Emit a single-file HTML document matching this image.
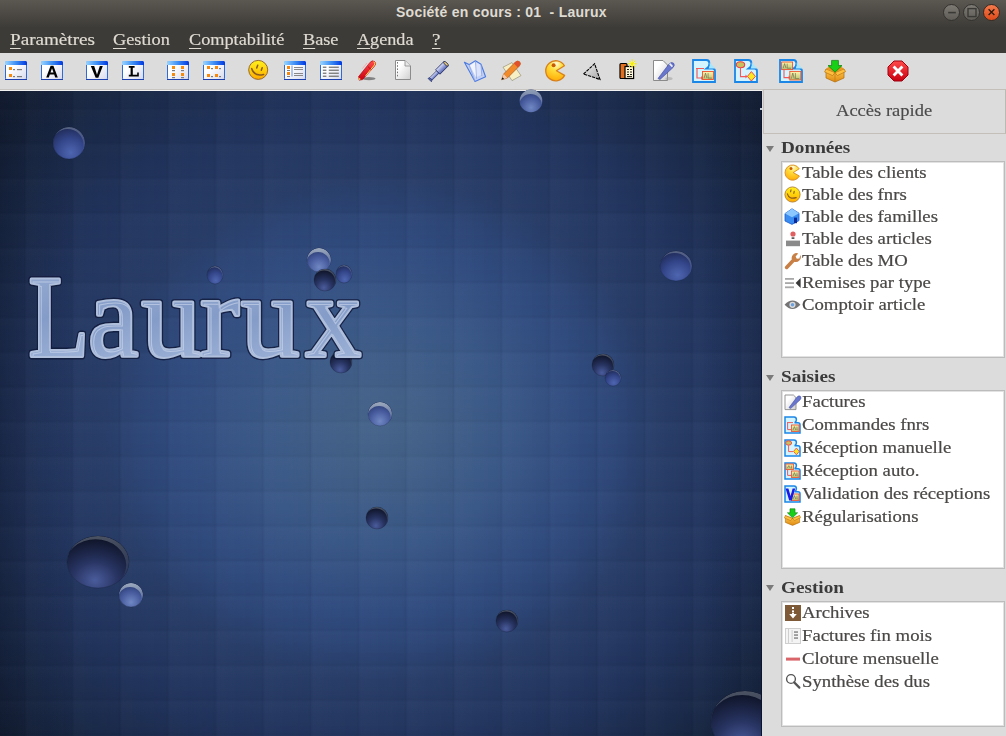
<!DOCTYPE html>
<html><head><meta charset="utf-8"><style>
*{margin:0;padding:0;box-sizing:border-box}
html,body{width:1006px;height:736px;overflow:hidden;background:#dcdcdc;font-family:"Liberation Serif",serif;position:relative}
.abs{position:absolute}
.ic{position:absolute;overflow:visible}
#title{left:0;top:0;width:1006px;height:27px;background:linear-gradient(#5b5751,#3e3c38);}
#title .t{position:absolute;left:396px;top:4px;font:bold 14px "Liberation Sans",sans-serif;color:#dfdbd2;letter-spacing:0.25px;white-space:pre}
.wb{position:absolute;top:4px;width:17px;height:17px;border-radius:50%;border:1px solid #34332f;background:linear-gradient(#7d7a74,#5f5c57)}
#menu{left:0;top:27px;width:1006px;height:26px;background:#3c3b37}
#menu span{position:absolute;top:3px;font-size:17px;color:#dfdbd2;-webkit-text-stroke:0.2px #dfdbd2;white-space:pre;display:inline-block;transform-origin:0 0}
#menu u{text-decoration:underline;text-underline-offset:2.5px;text-decoration-thickness:1px}
#tool{left:0;top:53px;width:1006px;height:36px;background:#dcdcdc}
#sep{left:0;top:89px;width:763px;height:1px;background:#c8c4bf}
#sep2{left:0;top:90px;width:762px;height:1px;background:#f2f2f2}
#mdi{left:0;top:91px;width:762px;height:645px;overflow:hidden;
background:
 repeating-linear-gradient(90deg, rgba(0,0,0,0.07) 0px, rgba(0,0,0,0.01) 1.2px, rgba(255,255,255,0.01) 3px, rgba(0,0,0,0.0) 24px, rgba(0,0,0,0.02) 46px, rgba(0,0,0,0.05) 47.7px),
 repeating-linear-gradient(180deg, rgba(0,0,0,0.055) 0px, rgba(0,0,0,0.01) 1.2px, rgba(255,255,255,0.01) 3px, rgba(0,0,0,0.0) 17px, rgba(0,0,0,0.015) 33px, rgba(0,0,0,0.045) 34.8px),
 linear-gradient(90deg, rgba(8,12,24,0.28) 0px, rgba(8,12,24,0.12) 30px, rgba(8,12,24,0) 80px, rgba(8,12,24,0) 700px, rgba(8,12,24,0.12) 762px),
 radial-gradient(ellipse 250px 225px at 380px 339px, #46648b 0%, #436189 16%, #3a5888 52%, #314c80 80%, #2d4778 94%, #283d68 112%, #243862 132%, #20325a 150%, #1a2a4a 175%, #15213a 200%, #121b2e 230%);
background-position: 23.9px 0, 0 16.6px, 0 0, 0 0;
}
#dock{left:762px;top:90px;width:244px;height:646px;background:#dcdcdc}
#acc{left:763px;top:89px;width:243px;height:45px;border:1px solid #c4c0b9;border-right-color:#bdb9b2;background:#dcdcdc}
#acc span{position:absolute;left:72px;top:11px;font-size:17px;color:#4a4a4a;display:inline-block;transform:scaleX(1.09);-webkit-text-stroke:0.15px #4a4a4a;transform-origin:0 0;white-space:pre}
.hdr{position:absolute;left:781px;font-weight:bold;font-size:16px;color:#3a3a3a;display:inline-block;transform:scaleX(1.2);transform-origin:0 0;white-space:pre}
.arr{position:absolute;left:766px;width:0;height:0;border-left:4px solid transparent;border-right:4px solid transparent;border-top:6px solid #7a7a7a}
.lb{position:absolute;left:781px;width:224px;border:1px solid #bcbcbc;background:#fff;box-shadow:inset 1px 1px 0 #e2e2e2, inset -1px -1px 0 #e2e2e2}
.tx{position:absolute;left:802px;font-size:16px;color:#4a4846;-webkit-text-stroke:0.2px #4a4846;display:inline-block;transform:scaleX(1.17);transform-origin:0 0;white-space:pre;line-height:18px}
</style></head><body>
<svg width="0" height="0" style="position:absolute">
<defs>
<linearGradient id="wt" x1="0" y1="0" x2="1" y2="0"><stop offset="0" stop-color="#9ad6ff"/><stop offset="0.5" stop-color="#3d8ef5"/><stop offset="1" stop-color="#0038e0"/></linearGradient>
<linearGradient id="wb" x1="0" y1="0" x2="1" y2="1"><stop offset="0.35" stop-color="#ffffff"/><stop offset="1" stop-color="#d6d9ec"/></linearGradient>
<radialGradient id="yelp" cx="0.55" cy="0.15" r="0.9"><stop offset="0" stop-color="#fffbe0"/><stop offset="0.35" stop-color="#ffe040"/><stop offset="1" stop-color="#ffa800"/></radialGradient><linearGradient id="yel" x1="0" y1="0" x2="0" y2="1"><stop offset="0" stop-color="#fff020"/><stop offset="0.5" stop-color="#ffd20a"/><stop offset="1" stop-color="#ffa800"/></linearGradient>
<linearGradient id="docg" x1="0" y1="0" x2="1" y2="1"><stop offset="0.3" stop-color="#ffffff"/><stop offset="1" stop-color="#cfcfcf"/></linearGradient>
<linearGradient id="telg2" x1="0" y1="0" x2="0" y2="1"><stop offset="0" stop-color="#dfe4fa"/><stop offset="0.5" stop-color="#9aa6dc"/><stop offset="1" stop-color="#5664b0"/></linearGradient><linearGradient id="telg" x1="0" y1="0" x2="1" y2="0"><stop offset="0" stop-color="#c8d0f0"/><stop offset="1" stop-color="#5866b0"/></linearGradient>
<linearGradient id="boxg" x1="0" y1="0" x2="0" y2="1"><stop offset="0" stop-color="#ffcc55"/><stop offset="1" stop-color="#e08a10"/></linearGradient>
<linearGradient id="redg" x1="0" y1="0" x2="0" y2="1"><stop offset="0" stop-color="#ff4a4a"/><stop offset="1" stop-color="#c80010"/></linearGradient>
<linearGradient id="abg" x1="0" y1="0" x2="0" y2="1"><stop offset="0" stop-color="#fff7b0"/><stop offset="1" stop-color="#b8c070"/></linearGradient>
<radialGradient id="drop" cx="0.55" cy="0.8" r="0.8"><stop offset="0" stop-color="#4e66b0"/><stop offset="0.55" stop-color="#34468a"/><stop offset="1" stop-color="#1e2a56"/></radialGradient>
<radialGradient id="dropd" cx="0.45" cy="0.85" r="0.8"><stop offset="0" stop-color="#4a5c9c"/><stop offset="0.45" stop-color="#283462"/><stop offset="1" stop-color="#0e1428"/></radialGradient>
<radialGradient id="dropl" cx="0.5" cy="0.8" r="0.75"><stop offset="0" stop-color="#7088c4"/><stop offset="0.6" stop-color="#44589a"/><stop offset="1" stop-color="#2c3c70"/></radialGradient>
<linearGradient id="rim" x1="0.3" y1="0" x2="0.5" y2="1"><stop offset="0" stop-color="#c0ccd4" stop-opacity="0.85"/><stop offset="0.22" stop-color="#8aa0c0" stop-opacity="0"/></linearGradient>
<linearGradient id="txt" x1="0" y1="0" x2="0.2" y2="1"><stop offset="0" stop-color="#9cb0d4"/><stop offset="0.55" stop-color="#849cc8"/><stop offset="1" stop-color="#a0b4d8"/></linearGradient>
</defs></svg>
<div id="title" class="abs"><div class="t">Société en cours : 01  - Laurux</div>
 <div class="wb" style="left:943px"></div>
 <div class="wb" style="left:963px"></div>
 <div class="wb" style="left:983px;background:linear-gradient(#f47a4c,#df4a19);border-color:#3b2a22"></div>
 <svg class="ic" style="left:940px;top:0" width="66" height="27" viewBox="0 0 66 27"><path d="M8.2,12.6 H15.8" stroke="#3a3935" stroke-width="1.6"/><rect x="28" y="8.6" width="8" height="8" fill="none" stroke="#3a3935" stroke-width="1.4"/><path d="M48.6,9.2 L54.4,15 M54.4,9.2 L48.6,15" stroke="#2a1a10" stroke-width="1.3"/></svg>
</div>
<div id="menu" class="abs">
 <span style="left:10px;transform:scaleX(1.125)"><u>P</u>aramètres</span>
 <span style="left:113px;transform:scaleX(1.076)"><u>G</u>estion</span>
 <span style="left:189px;transform:scaleX(1.073)"><u>C</u>omptabilité</span>
 <span style="left:303px;transform:scaleX(1.073)"><u>B</u>ase</span>
 <span style="left:357px;transform:scaleX(1.068)"><u>A</u>genda</span>
 <span style="left:432px;transform:scaleX(1.12)"><u>?</u></span>
</div>
<div id="tool" class="abs"></div>
<svg class="ic" style="left:5px;top:61px" width="22" height="19" viewBox="0 0 22 19"><rect x="0.5" y="0.5" width="21" height="18" rx="1.2" fill="url(#wb)" stroke="#2f6ad6"/><path d="M0,4 V1.5 Q0,0 1.5,0 H20.5 Q22,0 22,1.5 V4 Z" fill="url(#wt)"/><rect x="0" y="18" width="22" height="1" fill="#1c3fb0"/><rect x="4" y="6" width="3" height="3" fill="#f78a0c"/><rect x="4" y="13" width="3" height="3" fill="#f78a0c"/><rect x="8" y="8" width="2" height="1.2" fill="#7c7c7c"/><rect x="12" y="8" width="5" height="1.2" fill="#7c7c7c"/><rect x="8" y="15" width="2" height="1.2" fill="#7c7c7c"/><rect x="12" y="15" width="5" height="1.2" fill="#7c7c7c"/></svg>
<svg class="ic" style="left:41px;top:61px" width="22" height="19" viewBox="0 0 22 19"><rect x="0.5" y="0.5" width="21" height="18" rx="1.2" fill="url(#wb)" stroke="#2f6ad6"/><path d="M0,4 V1.5 Q0,0 1.5,0 H20.5 Q22,0 22,1.5 V4 Z" fill="url(#wt)"/><rect x="0" y="18" width="22" height="1" fill="#1c3fb0"/><path d="M5.2,16.6 L9.6,4.8 H12.4 L16.8,16.6 H14.2 L13.2,13.6 H8.8 L7.8,16.6 Z M9.5,11.5 H12.5 L11,7.2 Z" fill="#000" fill-rule="evenodd"/></svg>
<svg class="ic" style="left:86px;top:61px" width="22" height="19" viewBox="0 0 22 19"><rect x="0.5" y="0.5" width="21" height="18" rx="1.2" fill="url(#wb)" stroke="#2f6ad6"/><path d="M0,4 V1.5 Q0,0 1.5,0 H20.5 Q22,0 22,1.5 V4 Z" fill="url(#wt)"/><rect x="0" y="18" width="22" height="1" fill="#1c3fb0"/><path d="M4.8,5 H8.2 L11,13.8 L13.8,5 H16.8 L12.3,16.8 H9.7 Z" fill="#000"/></svg>
<svg class="ic" style="left:122px;top:61px" width="22" height="19" viewBox="0 0 22 19"><rect x="0.5" y="0.5" width="21" height="18" rx="1.2" fill="url(#wb)" stroke="#2f6ad6"/><path d="M0,4 V1.5 Q0,0 1.5,0 H20.5 Q22,0 22,1.5 V4 Z" fill="url(#wt)"/><rect x="0" y="18" width="22" height="1" fill="#1c3fb0"/><path d="M6.8,5 H12.6 V6.8 H10.8 V13.8 H15.2 V11.4 H16.8 V15.6 H6.8 V13.8 H8.6 V6.8 H6.8 Z" fill="#000"/></svg>
<svg class="ic" style="left:167px;top:61px" width="22" height="19" viewBox="0 0 22 19"><rect x="0.5" y="0.5" width="21" height="18" rx="1.2" fill="url(#wb)" stroke="#2f6ad6"/><path d="M0,4 V1.5 Q0,0 1.5,0 H20.5 Q22,0 22,1.5 V4 Z" fill="url(#wt)"/><rect x="0" y="18" width="22" height="1" fill="#1c3fb0"/><rect x="5" y="5" width="3" height="3" fill="#f78a0c"/><rect x="5" y="9" width="3" height="1.2" fill="#7c7c7c"/><rect x="5" y="12" width="3" height="3" fill="#f78a0c"/><rect x="5" y="16" width="3" height="1.2" fill="#7c7c7c"/><rect x="14" y="5" width="3" height="3" fill="#f78a0c"/><rect x="14" y="9" width="3" height="1.2" fill="#7c7c7c"/><rect x="14" y="12" width="3" height="3" fill="#f78a0c"/><rect x="14" y="16" width="3" height="1.2" fill="#7c7c7c"/></svg>
<svg class="ic" style="left:203px;top:61px" width="22" height="19" viewBox="0 0 22 19"><rect x="0.5" y="0.5" width="21" height="18" rx="1.2" fill="url(#wb)" stroke="#2f6ad6"/><path d="M0,4 V1.5 Q0,0 1.5,0 H20.5 Q22,0 22,1.5 V4 Z" fill="url(#wt)"/><rect x="0" y="18" width="22" height="1" fill="#1c3fb0"/><rect x="4" y="5" width="3" height="3" fill="#f78a0c"/><rect x="8" y="7" width="2" height="1.2" fill="#7c7c7c"/><rect x="4" y="13" width="3" height="3" fill="#f78a0c"/><rect x="8" y="15" width="2" height="1.2" fill="#7c7c7c"/><rect x="12" y="5" width="3" height="3" fill="#f78a0c"/><rect x="16" y="7" width="2" height="1.2" fill="#7c7c7c"/><rect x="12" y="13" width="3" height="3" fill="#f78a0c"/><rect x="16" y="15" width="2" height="1.2" fill="#7c7c7c"/></svg>
<svg class="ic" style="left:247px;top:59px" width="22" height="22" viewBox="0 0 22 22"><circle cx="11.2" cy="10.9" r="9.5" fill="url(#yel)" stroke="#9a6a2a" stroke-width="1"/><path d="M4.6,9.6 Q7.4,17.8 16.6,15.4" fill="none" stroke="#8a5a20" stroke-width="1.5" stroke-linecap="round"/><path d="M10.7,6.2 L9.7,9.1 M15.2,8.7 L14.3,11.3" stroke="#8a5a20" stroke-width="1.5" stroke-linecap="round"/></svg>
<svg class="ic" style="left:284px;top:61px" width="22" height="19" viewBox="0 0 22 19"><rect x="0.5" y="0.5" width="21" height="18" rx="1.2" fill="url(#wb)" stroke="#2f6ad6"/><path d="M0,4 V1.5 Q0,0 1.5,0 H20.5 Q22,0 22,1.5 V4 Z" fill="url(#wt)"/><rect x="0" y="18" width="22" height="1" fill="#1c3fb0"/><rect x="3" y="5" width="3" height="3" fill="#f78a0c"/><rect x="3" y="11" width="3" height="3" fill="#f78a0c"/><rect x="3" y="9" width="3" height="1" fill="#7c7c7c"/><rect x="3" y="15" width="3" height="1" fill="#7c7c7c"/><rect x="7.5" y="4.5" width="1" height="11" fill="#6a90d8"/><rect x="10" y="6" width="9" height="1" fill="#888"/><rect x="10" y="8" width="9" height="1" fill="#888"/><rect x="10" y="12" width="9" height="1" fill="#888"/><rect x="10" y="14" width="9" height="1" fill="#888"/></svg>
<svg class="ic" style="left:320px;top:61px" width="22" height="19" viewBox="0 0 22 19"><rect x="0.5" y="0.5" width="21" height="18" rx="1.2" fill="url(#wb)" stroke="#2f6ad6"/><path d="M0,4 V1.5 Q0,0 1.5,0 H20.5 Q22,0 22,1.5 V4 Z" fill="url(#wt)"/><rect x="0" y="18" width="22" height="1" fill="#1c3fb0"/><rect x="2.8" y="5.6" width="3.6" height="1.3" fill="#777"/><rect x="8.8" y="5.6" width="10" height="1.3" fill="#777"/><rect x="2.8" y="8.6" width="3.6" height="1.3" fill="#777"/><rect x="8.8" y="8.6" width="10" height="1.3" fill="#777"/><rect x="2.8" y="11.6" width="3.6" height="1.3" fill="#777"/><rect x="8.8" y="11.6" width="10" height="1.3" fill="#777"/><rect x="2.8" y="14.6" width="3.6" height="1.3" fill="#777"/><rect x="8.8" y="14.6" width="10" height="1.3" fill="#777"/></svg>
<svg class="ic" style="left:356px;top:58px" width="22" height="24" viewBox="0 0 22 24"><ellipse cx="13" cy="20.6" rx="6.5" ry="1.7" fill="#444" opacity="0.6"/><path d="M3.2,22.2 L2.6,18.6 L14.2,4.2 Q16.4,1.8 18.6,3.6 Q20.6,5.6 18.6,8 L6.6,21.6 Z" fill="url(#redg)" stroke="#a8000c" stroke-width="0.6"/><path d="M17.6,3.6 Q19.6,5 18.4,7 L9.6,17.8" stroke="#ffe04a" stroke-width="1" fill="none"/><path d="M12,8.6 L15.2,11.6" stroke="#b0000c" stroke-width="0.8"/><path d="M6.4,10.6 L11,5" stroke="#ff9090" stroke-width="0.8" opacity="0.8"/><path d="M3.2,22.2 L2.6,19.6 L4.8,21 Z" fill="#ffd040"/></svg>
<svg class="ic" style="left:394px;top:59px" width="18" height="22" viewBox="0 0 18 22"><path d="M1.5,1.5 H11 L16.5,7 V20.5 H1.5 Z" fill="url(#docg)" stroke="#8c8c8c"/><path d="M11,1.5 V7 H16.5" fill="#e8e8e8" stroke="#8c8c8c" stroke-width="0.8"/><path d="M3.5,3 V19" stroke="#777" stroke-width="1" stroke-dasharray="1.6,1.6"/></svg>
<svg class="ic" style="left:427px;top:58px" width="24" height="24" viewBox="0 0 24 24"><g transform="translate(12.2,12.6) rotate(-45)"><path d="M-13.4,-2.4 L-11.6,-1.5 L-11.6,1.5 L-13.4,2.4 Z" fill="#5a68b0" stroke="#2a3470" stroke-width="0.7"/><rect x="-11.6" y="-1.7" width="9.6" height="3.4" fill="url(#telg2)" stroke="#2a3470" stroke-width="0.7"/><rect x="-2" y="-3.1" width="11.6" height="6.2" fill="url(#telg2)" stroke="#1e2860" stroke-width="0.8"/><ellipse cx="9.6" cy="0" rx="1.3" ry="3.1" fill="#e8c870" stroke="#1e2860" stroke-width="0.8"/></g></svg>
<svg class="ic" style="left:463px;top:59px" width="24" height="24" viewBox="0 0 24 24"><path d="M1.4,3.2 L6,5.6 L12.4,1.8 L18,5.2 L22.6,17.8 L12,22.4 Z" fill="#c4d0f2" stroke="#4a7ae0" stroke-width="1.1" stroke-linejoin="round"/><path d="M6,5.6 L12,22.4 M12.4,1.8 L13.6,19.8 M18,5.2 L18.8,17" stroke="#8aa4e8" stroke-width="0.8" fill="none"/><path d="M7,6.4 L12,3 L13,18.4 Z" fill="#f2f4ff"/><path d="M13.4,3.4 L17.2,5.8 L18.2,16 L13.8,18 Z" fill="#dde4fa"/></svg>
<svg class="ic" style="left:499px;top:58px" width="24" height="24" viewBox="0 0 24 24"><path d="M4,9.2 L13,4.6 L22,17.6 L13,22.6 Z" fill="#f6eec4" stroke="#8a846a" stroke-width="0.6"/><path d="M2.6,21.8 L4.6,16 L16.4,4 Q18.6,2 20.6,3.8 Q22.4,5.8 20.4,8 L8.4,20 Z" fill="#f08a2a" stroke="#a0501a" stroke-width="0.6"/><path d="M16.4,4 Q18.6,2 20.6,3.8 Q22.4,5.8 20.4,8 L18.8,9.6 L14.8,5.6 Z" fill="#e0502a"/><path d="M2.6,21.8 L4.6,16 L8.4,20 Z" fill="#f4c8a8"/><path d="M2.6,21.8 L3.4,19.2 L5.2,20.9 Z" fill="#111"/></svg>
<svg class="ic" style="left:544px;top:59px" width="23" height="23" viewBox="0 0 23 23"><path d="M20.4,6.8 A10,10 0 1 0 20.6,16.4 L12.4,11.8 Z" fill="url(#yelp)" stroke="#d8801a" stroke-width="1.3" stroke-linejoin="round"/><circle cx="9.6" cy="6.2" r="2" fill="#c85a00"/></svg>
<svg class="ic" style="left:582px;top:62px" width="20" height="19" viewBox="0 0 20 19"><defs><linearGradient id="trg" x1="0" y1="0" x2="1" y2="1"><stop offset="0" stop-color="#f0f0f0"/><stop offset="1" stop-color="#a8a8a8"/></linearGradient></defs><path d="M1.5,12 L12.6,1.8 L18,17.5 Z" fill="url(#trg)"/><path d="M1.5,12 L12.6,1.8 L18,17.5 Z" fill="none" stroke="#000" stroke-width="1.1" stroke-dasharray="3.2,0.9"/></svg>
<svg class="ic" style="left:619px;top:59px" width="20" height="21" viewBox="0 0 20 21"><rect x="1" y="4.5" width="7" height="15" rx="1" fill="#e07020" stroke="#000" stroke-width="1.2"/><rect x="6" y="7.5" width="8.6" height="12" fill="#fff8d8" stroke="#000" stroke-width="1.2"/><path d="M8,10.5 H10 M11,10.5 H13 M8,13 H10 M11,13 H13 M8,15.5 H10 M11,15.5 H13 M8,17.6 H13" stroke="#000" stroke-width="0.9"/><circle cx="13.2" cy="4.8" r="2.6" fill="#ffffa0"/><path d="M13.2,0.2 V9.4 M8.6,4.8 H17.8 M10,1.6 L16.4,8 M16.4,1.6 L10,8" stroke="#f4e800" stroke-width="0.9"/></svg>
<svg class="ic" style="left:652px;top:59px" width="24" height="23" viewBox="0 0 24 23"><path d="M1.5,1.5 H11 L15.5,6 V21.5 H1.5 Z" fill="url(#docg)" stroke="#8a8a8a"/><path d="M6,19.5 L17,5 Q19.5,2.5 21.6,4.2 Q23.2,6.2 21,8.6 L8,20.5 Z" fill="#6876cc" stroke="#3a46a0" stroke-width="0.6"/><path d="M17.6,4.6 L20.4,7.6" stroke="#f0f0f8" stroke-width="1.6"/><ellipse cx="17" cy="19.6" rx="3.6" ry="1.6" fill="#999" opacity="0.5"/></svg>
<svg class="ic" style="left:692px;top:59px" width="24" height="24" viewBox="0 0 24 24"><path d="M1,1 H14.4 Q17.4,1 17.4,4.4 Q17.4,7.6 14.8,9.2 L14.4,9.5 H20.4 Q23,9.5 23,12.2 V23 H1 Z" fill="#d4f4ff" stroke="#1b86e6" stroke-width="1.8"/><path d="M17.6,3.4 L23,9 V9.6 H16.6 Q18.4,7.6 17.6,3.4 Z" fill="#a6e6ff"/><path d="M4,9.5 H12 M5,9.5 V19 H9" stroke="#f05a5a" stroke-width="1.2" fill="none"/><path d="M9,17 L11,19 L9,21 Z" fill="#f05a5a"/><rect x="10.5" y="12.5" width="11" height="8" fill="url(#abg)" stroke="#f0502a" stroke-width="0.9"/><path d="M12.1,19.1 L13.5,14.1 L14.9,19.1 M16.1,14.1 V19.1 H19.9" stroke="#606040" stroke-width="0.6" fill="none"/></svg>
<svg class="ic" style="left:734px;top:59px" width="24" height="24" viewBox="0 0 24 24"><path d="M1,1 H14.4 Q17.4,1 17.4,4.4 Q17.4,7.6 14.8,9.2 L14.4,9.5 H20.4 Q23,9.5 23,12.2 V23 H1 Z" fill="#d4f4ff" stroke="#1b86e6" stroke-width="1.8"/><path d="M17.6,3.4 L23,9 V9.6 H16.6 Q18.4,7.6 17.6,3.4 Z" fill="#a6e6ff"/><ellipse cx="6.5" cy="5.8" rx="4.2" ry="3" fill="#c8c060" stroke="#f04040" stroke-width="1.1"/><path d="M6.5,9 V17.6 H12" stroke="#f05a5a" stroke-width="1.1" fill="none"/><path d="M11.5,15.6 L13.6,17.6 L11.5,19.6 Z" fill="#f05a5a"/><path d="M17.4,12.6 L21.4,17.4 L17.4,22 L13.4,17.4 Z" fill="#ffe820" stroke="#f04040" stroke-width="0.9"/></svg>
<svg class="ic" style="left:779px;top:59px" width="24" height="24" viewBox="0 0 24 24"><path d="M1,1 H14.4 Q17.4,1 17.4,4.4 Q17.4,7.6 14.8,9.2 L14.4,9.5 H20.4 Q23,9.5 23,12.2 V23 H1 Z" fill="#d4f4ff" stroke="#1b86e6" stroke-width="1.8"/><path d="M17.6,3.4 L23,9 V9.6 H16.6 Q18.4,7.6 17.6,3.4 Z" fill="#a6e6ff"/><rect x="2.6" y="3" width="11" height="7.6" fill="url(#abg)" stroke="#f0502a" stroke-width="0.9"/><path d="M4.2,9.2 L5.6,4.6 L7.0,9.2 M8.2,4.6 V9.2 H12.0" stroke="#606040" stroke-width="0.6" fill="none"/><path d="M5,10.6 V18.6 H10" stroke="#f05a5a" stroke-width="1.1" fill="none"/><path d="M9.6,16.6 L11.8,18.6 L9.6,20.6 Z" fill="#f05a5a"/><rect x="10.8" y="12.4" width="11" height="8.6" fill="url(#abg)" stroke="#f0502a" stroke-width="0.9"/><path d="M12.4,19.6 L13.8,14.0 L15.200000000000001,19.6 M16.4,14.0 V19.6 H20.2" stroke="#606040" stroke-width="0.6" fill="none"/></svg>
<svg class="ic" style="left:824px;top:59px" width="22" height="24" viewBox="0 0 22 24"><path d="M2,10 L11,13.6 L20,10 L20,19 L11,23 L2,19 Z" fill="url(#boxg)" stroke="#b06a08" stroke-width="0.7"/><path d="M11,13.6 V23" stroke="#c07a10" stroke-width="0.7"/><path d="M2,10 L0.6,13 L8.6,16.6 L11,13.6 Z M20,10 L21.6,12.6 L13.4,16.6 L11,13.6 Z" fill="#ffc040" stroke="#b06a08" stroke-width="0.6"/><path d="M2,10 L6,6.6 L11,8.6 L16,6.6 L20,10 L11,13.6 Z" fill="#e89820"/><path d="M7.6,1.4 H14.4 V6.6 H18 L11,13.2 L4,6.6 H7.6 Z" fill="#18d018" stroke="#087a08" stroke-width="0.7"/></svg>
<svg class="ic" style="left:887px;top:60px" width="22" height="22" viewBox="0 0 22 22"><path d="M7,1 H15 L21,7 V15 L15,21 H7 L1,15 V7 Z" fill="url(#redg)" stroke="#a00010" stroke-width="1"/><path d="M6.6,6.6 L15.4,15.4 M15.4,6.6 L6.6,15.4" stroke="#fff" stroke-width="2.8"/></svg>
<div id="sep" class="abs"></div>
<div id="sep2" class="abs"></div>
<div id="mdi" class="abs">
<svg width="762" height="645" style="position:absolute;left:0;top:0">
<defs><filter id="tb"><feGaussianBlur stdDeviation="0.45"/></filter><filter id="tsh" x="-10%" y="-10%" width="120%" height="130%"><feGaussianBlur in="SourceAlpha" stdDeviation="2"/><feOffset dx="2" dy="3"/><feComponentTransfer><feFuncA type="linear" slope="0.55"/></feComponentTransfer><feGaussianBlur in="SourceGraphic" stdDeviation="0.5" result="sg"/><feMerge><feMergeNode/><feMergeNode in="sg"/></feMerge></filter></defs>
<filter id="rb" x="-20%" y="-20%" width="140%" height="140%"><feGaussianBlur stdDeviation="0.7"/></filter><linearGradient id="cres" x1="0" y1="0" x2="0" y2="1"><stop offset="0" stop-color="#c4d0d8" stop-opacity="0.85"/><stop offset="0.5" stop-color="#a0b0c4" stop-opacity="0.5"/><stop offset="1" stop-color="#8090b0" stop-opacity="0"/></linearGradient><clipPath id="dc0"><ellipse cx="69" cy="52" rx="16" ry="16"/></clipPath><ellipse cx="69" cy="52" rx="16" ry="16" fill="url(#drop)" stroke="#0e1428" stroke-opacity="0.3" stroke-width="0.8"/><g clip-path="url(#dc0)"><path d="M53,52 A16,16 0 1 1 85,52 A16,16 0 1 1 53,52 Z M51.88,53.92 A15.84,15.84 0 1 0 83.56,53.92 A15.84,15.84 0 1 0 51.88,53.92 Z" fill-rule="evenodd" fill="url(#cres)" opacity="0.4" transform="translate(0,0)" filter="url(#rb)"/></g><clipPath id="dc1"><ellipse cx="215" cy="184" rx="8" ry="9"/></clipPath><ellipse cx="215" cy="184" rx="8" ry="9" fill="url(#drop)" stroke="#0e1428" stroke-opacity="0.3" stroke-width="0.8"/><g clip-path="url(#dc1)"><path d="M207,184 A8,9 0 1 1 223,184 A8,9 0 1 1 207,184 Z M206.44,185.08 A7.92,8.91 0 1 0 222.28,185.08 A7.92,8.91 0 1 0 206.44,185.08 Z" fill-rule="evenodd" fill="url(#cres)" opacity="0.4" transform="translate(0,0)" filter="url(#rb)"/></g><clipPath id="dc2"><ellipse cx="319" cy="169" rx="12" ry="12"/></clipPath><ellipse cx="319" cy="169" rx="12" ry="12" fill="url(#dropl)" stroke="#0e1428" stroke-opacity="0.3" stroke-width="0.8"/><g clip-path="url(#dc2)"><path d="M307,169 A12,12 0 1 1 331,169 A12,12 0 1 1 307,169 Z M306.40,172.60 A11.64,11.64 0 1 0 329.68,172.60 A11.64,11.64 0 1 0 306.40,172.60 Z" fill-rule="evenodd" fill="url(#cres)" opacity="0.9" transform="translate(0,0)" filter="url(#rb)"/></g><clipPath id="dc3"><ellipse cx="325" cy="189" rx="11" ry="11"/></clipPath><ellipse cx="325" cy="189" rx="11" ry="11" fill="url(#dropd)" stroke="#0e1428" stroke-opacity="0.3" stroke-width="0.8"/><g clip-path="url(#dc3)"><path d="M314,189 A11,11 0 1 1 336,189 A11,11 0 1 1 314,189 Z M313.23,190.32 A10.89,10.89 0 1 0 335.01,190.32 A10.89,10.89 0 1 0 313.23,190.32 Z" fill-rule="evenodd" fill="url(#cres)" opacity="0.4" transform="translate(0,0)" filter="url(#rb)"/></g><clipPath id="dc4"><ellipse cx="344" cy="183" rx="8" ry="9"/></clipPath><ellipse cx="344" cy="183" rx="8" ry="9" fill="url(#drop)" stroke="#0e1428" stroke-opacity="0.3" stroke-width="0.8"/><g clip-path="url(#dc4)"><path d="M336,183 A8,9 0 1 1 352,183 A8,9 0 1 1 336,183 Z M335.44,184.08 A7.92,8.91 0 1 0 351.28,184.08 A7.92,8.91 0 1 0 335.44,184.08 Z" fill-rule="evenodd" fill="url(#cres)" opacity="0.4" transform="translate(0,0)" filter="url(#rb)"/></g><clipPath id="dc5"><ellipse cx="341" cy="271" rx="11" ry="11"/></clipPath><ellipse cx="341" cy="271" rx="11" ry="11" fill="url(#dropd)" stroke="#0e1428" stroke-opacity="0.3" stroke-width="0.8"/><g clip-path="url(#dc5)"><path d="M330,271 A11,11 0 1 1 352,271 A11,11 0 1 1 330,271 Z M329.23,272.32 A10.89,10.89 0 1 0 351.01,272.32 A10.89,10.89 0 1 0 329.23,272.32 Z" fill-rule="evenodd" fill="url(#cres)" opacity="0.4" transform="translate(0,0)" filter="url(#rb)"/></g><clipPath id="dc6"><ellipse cx="676" cy="175" rx="16" ry="15"/></clipPath><ellipse cx="676" cy="175" rx="16" ry="15" fill="url(#drop)" stroke="#0e1428" stroke-opacity="0.3" stroke-width="0.8"/><g clip-path="url(#dc6)"><path d="M660,175 A16,15 0 1 1 692,175 A16,15 0 1 1 660,175 Z M658.88,176.80 A15.84,14.85 0 1 0 690.56,176.80 A15.84,14.85 0 1 0 658.88,176.80 Z" fill-rule="evenodd" fill="url(#cres)" opacity="0.4" transform="translate(0,0)" filter="url(#rb)"/></g><clipPath id="dc7"><ellipse cx="603" cy="274" rx="11" ry="11"/></clipPath><ellipse cx="603" cy="274" rx="11" ry="11" fill="url(#dropd)" stroke="#0e1428" stroke-opacity="0.3" stroke-width="0.8"/><g clip-path="url(#dc7)"><path d="M592,274 A11,11 0 1 1 614,274 A11,11 0 1 1 592,274 Z M591.23,275.32 A10.89,10.89 0 1 0 613.01,275.32 A10.89,10.89 0 1 0 591.23,275.32 Z" fill-rule="evenodd" fill="url(#cres)" opacity="0.4" transform="translate(0,0)" filter="url(#rb)"/></g><clipPath id="dc8"><ellipse cx="613" cy="287" rx="8" ry="8"/></clipPath><ellipse cx="613" cy="287" rx="8" ry="8" fill="url(#drop)" stroke="#0e1428" stroke-opacity="0.3" stroke-width="0.8"/><g clip-path="url(#dc8)"><path d="M605,287 A8,8 0 1 1 621,287 A8,8 0 1 1 605,287 Z M604.44,287.96 A7.92,7.92 0 1 0 620.28,287.96 A7.92,7.92 0 1 0 604.44,287.96 Z" fill-rule="evenodd" fill="url(#cres)" opacity="0.4" transform="translate(0,0)" filter="url(#rb)"/></g><clipPath id="dc9"><ellipse cx="380" cy="323" rx="12" ry="12"/></clipPath><ellipse cx="380" cy="323" rx="12" ry="12" fill="url(#dropl)" stroke="#0e1428" stroke-opacity="0.3" stroke-width="0.8"/><g clip-path="url(#dc9)"><path d="M368,323 A12,12 0 1 1 392,323 A12,12 0 1 1 368,323 Z M367.40,326.60 A11.64,11.64 0 1 0 390.68,326.60 A11.64,11.64 0 1 0 367.40,326.60 Z" fill-rule="evenodd" fill="url(#cres)" opacity="0.9" transform="translate(0,0)" filter="url(#rb)"/></g><clipPath id="dc10"><ellipse cx="377" cy="427" rx="11" ry="11"/></clipPath><ellipse cx="377" cy="427" rx="11" ry="11" fill="url(#dropd)" stroke="#0e1428" stroke-opacity="0.3" stroke-width="0.8"/><g clip-path="url(#dc10)"><path d="M366,427 A11,11 0 1 1 388,427 A11,11 0 1 1 366,427 Z M365.23,428.32 A10.89,10.89 0 1 0 387.01,428.32 A10.89,10.89 0 1 0 365.23,428.32 Z" fill-rule="evenodd" fill="url(#cres)" opacity="0.4" transform="translate(0,0)" filter="url(#rb)"/></g><clipPath id="dc11"><ellipse cx="98" cy="471" rx="31" ry="26"/></clipPath><ellipse cx="98" cy="471" rx="31" ry="26" fill="url(#dropd)" stroke="#0e1428" stroke-opacity="0.3" stroke-width="0.8"/><g clip-path="url(#dc11)"><path d="M67,471 A31,26 0 1 1 129,471 A31,26 0 1 1 67,471 Z M64.83,474.12 A30.69,25.74 0 1 0 126.21,474.12 A30.69,25.74 0 1 0 64.83,474.12 Z" fill-rule="evenodd" fill="url(#cres)" opacity="0.4" transform="translate(0,0)" filter="url(#rb)"/></g><clipPath id="dc12"><ellipse cx="131" cy="504" rx="12" ry="12"/></clipPath><ellipse cx="131" cy="504" rx="12" ry="12" fill="url(#dropl)" stroke="#0e1428" stroke-opacity="0.3" stroke-width="0.8"/><g clip-path="url(#dc12)"><path d="M119,504 A12,12 0 1 1 143,504 A12,12 0 1 1 119,504 Z M118.40,507.60 A11.64,11.64 0 1 0 141.68,507.60 A11.64,11.64 0 1 0 118.40,507.60 Z" fill-rule="evenodd" fill="url(#cres)" opacity="0.9" transform="translate(0,0)" filter="url(#rb)"/></g><clipPath id="dc13"><ellipse cx="507" cy="530" rx="11" ry="11"/></clipPath><ellipse cx="507" cy="530" rx="11" ry="11" fill="url(#dropd)" stroke="#0e1428" stroke-opacity="0.3" stroke-width="0.8"/><g clip-path="url(#dc13)"><path d="M496,530 A11,11 0 1 1 518,530 A11,11 0 1 1 496,530 Z M495.23,531.32 A10.89,10.89 0 1 0 517.01,531.32 A10.89,10.89 0 1 0 495.23,531.32 Z" fill-rule="evenodd" fill="url(#cres)" opacity="0.4" transform="translate(0,0)" filter="url(#rb)"/></g><clipPath id="dc14"><ellipse cx="745" cy="631" rx="34" ry="31"/></clipPath><ellipse cx="745" cy="631" rx="34" ry="31" fill="url(#dropd)" stroke="#0e1428" stroke-opacity="0.3" stroke-width="0.8"/><g clip-path="url(#dc14)"><path d="M711,631 A34,31 0 1 1 779,631 A34,31 0 1 1 711,631 Z M708.62,634.72 A33.66,30.69 0 1 0 775.94,634.72 A33.66,30.69 0 1 0 708.62,634.72 Z" fill-rule="evenodd" fill="url(#cres)" opacity="0.4" transform="translate(0,0)" filter="url(#rb)"/></g>
<g font-family="Liberation Serif" font-size="117" fill="none" stroke="#121c38" stroke-opacity="0.55" stroke-width="6.5" stroke-linejoin="round" filter="url(#tsh)"><text transform="translate(28.6,265) scale(0.85,1)" x="0" y="0">L</text><text transform="translate(88.1,265) scale(0.97,1)" x="0" y="0">a</text><text transform="translate(141.5,265) scale(1.02,1)" x="0" y="0">u</text><text transform="translate(200.3,265) scale(1.0,1)" x="0" y="0">r</text><text transform="translate(241.1,265) scale(1.0,1)" x="0" y="0">u</text><text transform="translate(305.5,265) scale(0.95,1)" x="0" y="0">x</text></g><g font-family="Liberation Serif" font-size="117" fill="url(#txt)" stroke="#b0c0dc" stroke-width="4" stroke-linejoin="round" paint-order="stroke" filter="url(#tb)"><text transform="translate(28.6,265) scale(0.85,1)" x="0" y="0">L</text><text transform="translate(88.1,265) scale(0.97,1)" x="0" y="0">a</text><text transform="translate(141.5,265) scale(1.02,1)" x="0" y="0">u</text><text transform="translate(200.3,265) scale(1.0,1)" x="0" y="0">r</text><text transform="translate(241.1,265) scale(1.0,1)" x="0" y="0">u</text><text transform="translate(305.5,265) scale(0.95,1)" x="0" y="0">x</text></g><clipPath id="txclip"><text transform="translate(28.6,265) scale(0.85,1)" x="0" y="0" font-family="Liberation Serif" font-size="117">L</text><text transform="translate(88.1,265) scale(0.97,1)" x="0" y="0" font-family="Liberation Serif" font-size="117">a</text><text transform="translate(141.5,265) scale(1.02,1)" x="0" y="0" font-family="Liberation Serif" font-size="117">u</text><text transform="translate(200.3,265) scale(1.0,1)" x="0" y="0" font-family="Liberation Serif" font-size="117">r</text><text transform="translate(241.1,265) scale(1.0,1)" x="0" y="0" font-family="Liberation Serif" font-size="117">u</text><text transform="translate(305.5,265) scale(0.95,1)" x="0" y="0" font-family="Liberation Serif" font-size="117">x</text></clipPath><g font-family="Liberation Serif" font-size="117" fill="none" stroke="#e4ecf8" stroke-opacity="0.45" stroke-width="1.1" filter="url(#tb)" clip-path="url(#txclip)"><text transform="translate(30.200000000000003,266.2) scale(0.8372499999999999,0.985)" x="0" y="0">L</text><text transform="translate(89.69999999999999,266.2) scale(0.9554499999999999,0.985)" x="0" y="0">a</text><text transform="translate(143.1,266.2) scale(1.0047,0.985)" x="0" y="0">u</text><text transform="translate(201.9,266.2) scale(0.985,0.985)" x="0" y="0">r</text><text transform="translate(242.7,266.2) scale(0.985,0.985)" x="0" y="0">u</text><text transform="translate(307.1,266.2) scale(0.93575,0.985)" x="0" y="0">x</text></g>
</svg>
</div>
<svg style="position:absolute;left:515px;top:89px;overflow:hidden" width="32" height="30" viewBox="0 0 32 30"><defs><filter id="tdb"><feGaussianBlur stdDeviation="0.5"/></filter></defs><clipPath id="tdc"><ellipse cx="16" cy="11.8" rx="11.4" ry="11.4"/></clipPath><g filter="url(#tdb)"><ellipse cx="16" cy="11.8" rx="11.4" ry="11.4" fill="url(#dropl)"/><g clip-path="url(#tdc)"><path d="M4.6,11.8 A11.4,11.4 0 1 1 27.4,11.8 A11.4,11.4 0 1 1 4.6,11.8 Z M4.4,16.2 A11.2,11.2 0 1 0 26.8,16.2 A11.2,11.2 0 1 0 4.4,16.2 Z" fill-rule="evenodd" fill="url(#cres)" opacity="0.8"/></g></g></svg>
<div id="dock" class="abs"></div>
<div class="abs" style="left:761px;top:91px;width:1px;height:645px;background:#0b1430"></div>
<div class="abs" style="left:760px;top:108px;width:2px;height:2px;background:#c8d0dc"></div>
<div id="acc" class="abs"><span>Accès rapide</span></div>
<div class="arr" style="top:146px"></div>
<div class="hdr" style="top:139px">Données</div>
<div class="lb" style="top:161px;height:197px"></div>
<div class="arr" style="top:375px"></div>
<div class="hdr" style="top:368px">Saisies</div>
<div class="lb" style="top:390px;height:179px"></div>
<div class="arr" style="top:585px"></div>
<div class="hdr" style="top:579px">Gestion</div>
<div class="lb" style="top:601px;height:126px"></div>
<svg class="ic" style="left:784px;top:164px" width="17" height="17" viewBox="0 0 17 17"><path d="M15.2,4.8 A7.6,7.6 0 1 0 15.4,12 L9.2,8.6 Z" fill="url(#yelp)" stroke="#d88a20" stroke-width="0.9"/><circle cx="7" cy="4.4" r="1.5" fill="#c85a00"/></svg>
<svg class="ic" style="left:784px;top:186px" width="17" height="17" viewBox="0 0 17 17"><circle cx="8.5" cy="8.5" r="7.6" fill="url(#yel)" stroke="#a8742c" stroke-width="0.8"/><path d="M3.4,7.8 Q5,13.6 12.2,11.6" fill="none" stroke="#8a5a20" stroke-width="1.1" stroke-linecap="round"/><path d="M7,3.8 L6.6,5.8 M10.2,5.4 L9.8,7.4" stroke="#8a5a20" stroke-width="1.1" stroke-linecap="round"/></svg>
<svg class="ic" style="left:784px;top:208px" width="16" height="17" viewBox="0 0 16 17"><path d="M1,5.6 L8,0.8 L15,5.2 V12.6 L8,16.4 L1,13 Z" fill="#3a8cf0" stroke="#1a5ad0" stroke-width="0.8"/><path d="M1,5.6 L8,0.8 L15,5.2 L8,9.2 Z" fill="#8cc8ff"/><rect x="10" y="9.6" width="3" height="5.6" fill="#0a2a9a"/></svg>
<svg class="ic" style="left:784px;top:230px" width="17" height="17" viewBox="0 0 17 17"><circle cx="9" cy="4" r="2.6" fill="#e06060"/><rect x="7.6" y="7.4" width="2.8" height="1.4" fill="#333"/><rect x="2" y="10.6" width="14" height="5.6" fill="#8a8a8a"/></svg>
<svg class="ic" style="left:784px;top:252px" width="17" height="17" viewBox="0 0 17 17"><path d="M2.6,15.4 L9.4,8.2" stroke="#c88046" stroke-width="3.6" stroke-linecap="round"/><path d="M7.6,6.4 A5,5 0 0 1 14.2,1.4 L11.6,4.6 L12.8,6.8 L15.4,6.6 L16.4,3 A5,5 0 0 1 9.8,9.6 Z" fill="#c88046"/></svg>
<svg class="ic" style="left:784px;top:274px" width="17" height="17" viewBox="0 0 17 17"><rect x="1" y="4" width="9" height="1.8" fill="#a8a8a8"/><rect x="1" y="8.2" width="9" height="1.8" fill="#a8a8a8"/><rect x="1" y="12.4" width="9" height="1.8" fill="#a8a8a8"/><path d="M16.6,4 V14 L11.6,9 Z" fill="#3a3a3a"/></svg>
<svg class="ic" style="left:784px;top:296px" width="17" height="17" viewBox="0 0 17 17"><path d="M0.6,8.8 Q8.5,0.4 16.4,8.8 Q8.5,17.2 0.6,8.8 Z" fill="#747474"/><circle cx="8.5" cy="8.8" r="3.1" fill="#d8d8d8"/><circle cx="8.5" cy="8.8" r="1.7" fill="#6aa0e0"/></svg>
<svg class="ic" style="left:784px;top:394px" width="18" height="17" viewBox="0 0 18 17"><path d="M1,1 H9.4 L12,3.6 V15.6 H1 Z" fill="url(#docg)" stroke="#8a8a8a" stroke-width="0.9"/><path d="M5,13.6 L13,3 Q15,1 16.6,2.4 Q17.8,4 16,6 L6.6,14.6 Z" fill="#6876cc" stroke="#3a46a0" stroke-width="0.5"/></svg>
<svg class="ic" style="left:784px;top:416px" width="17" height="18" viewBox="0 0 17 18"><path d="M1,1 H10 Q12.4,1 12.4,3.6 Q12.4,6 10.6,6.8 H14 Q16,6.8 16,8.8 V17 H1 Z" fill="#d4f4ff" stroke="#1b86e6" stroke-width="1.5"/><path d="M3,6.6 H9 M3.6,6.6 V13.6 H7" stroke="#f05a5a" stroke-width="1" fill="none"/><rect x="7.4" y="9" width="7.6" height="6.4" fill="url(#abg)" stroke="#f0502a" stroke-width="0.9"/><path d="M9.0,14.0 L10.4,10.6 L11.8,14.0 M13.0,10.6 V14.0 H13.4" stroke="#606040" stroke-width="0.6" fill="none"/></svg>
<svg class="ic" style="left:784px;top:439px" width="17" height="18" viewBox="0 0 17 18"><path d="M1,1 H10 Q12.4,1 12.4,3.6 Q12.4,6 10.6,6.8 H14 Q16,6.8 16,8.8 V17 H1 Z" fill="#d4f4ff" stroke="#1b86e6" stroke-width="1.5"/><ellipse cx="4.6" cy="4" rx="3" ry="2.2" fill="#c8c060" stroke="#f04040" stroke-width="0.9"/><path d="M4.6,6.2 V12.6 H9" stroke="#f05a5a" stroke-width="1" fill="none"/><path d="M12.4,9 L15.2,12.4 L12.4,15.8 L9.6,12.4 Z" fill="#ffe820" stroke="#f04040" stroke-width="0.8"/></svg>
<svg class="ic" style="left:784px;top:462px" width="17" height="18" viewBox="0 0 17 18"><path d="M1,1 H10 Q12.4,1 12.4,3.6 Q12.4,6 10.6,6.8 H14 Q16,6.8 16,8.8 V17 H1 Z" fill="#d4f4ff" stroke="#1b86e6" stroke-width="1.5"/><rect x="1.8" y="2" width="7.6" height="5.6" fill="url(#abg)" stroke="#f0502a" stroke-width="0.9"/><path d="M3.4000000000000004,6.199999999999999 L4.8,3.6 L6.2,6.199999999999999 M7.3999999999999995,3.6 V6.199999999999999 H7.800000000000001" stroke="#606040" stroke-width="0.6" fill="none"/><path d="M3.6,7.6 V13.4 H7" stroke="#f05a5a" stroke-width="1" fill="none"/><rect x="7.4" y="9" width="7.6" height="6.4" fill="url(#abg)" stroke="#f0502a" stroke-width="0.9"/><path d="M9.0,14.0 L10.4,10.6 L11.8,14.0 M13.0,10.6 V14.0 H13.4" stroke="#606040" stroke-width="0.6" fill="none"/></svg>
<svg class="ic" style="left:784px;top:485px" width="17" height="18" viewBox="0 0 17 18"><path d="M1,1 H10 Q12.4,1 12.4,3.6 Q12.4,6 10.6,6.8 H14 Q16,6.8 16,8.8 V17 H1 Z" fill="#d4f4ff" stroke="#1b86e6" stroke-width="1.5"/><rect x="7.4" y="9" width="7.6" height="6.4" fill="url(#abg)" stroke="#f0502a" stroke-width="0.9"/><path d="M9.0,14.0 L10.4,10.6 L11.8,14.0 M13.0,10.6 V14.0 H13.4" stroke="#606040" stroke-width="0.6" fill="none"/><path d="M1.6,3.6 H4.4 L6.6,11 L8.6,3.6 H11.2 L7.8,15.4 H5.2 Z" fill="#1a1ae8"/></svg>
<svg class="ic" style="left:784px;top:508px" width="17" height="18" viewBox="0 0 17 18"><path d="M1.4,7.6 L8.5,10.4 L15.6,7.6 L15.6,14.4 L8.5,17.4 L1.4,14.4 Z" fill="url(#boxg)" stroke="#b06a08" stroke-width="0.6"/><path d="M1.4,7.6 L0.4,10 L6.6,12.6 L8.5,10.4 Z M15.6,7.6 L16.6,9.6 L10.4,12.6 L8.5,10.4 Z" fill="#ffc040" stroke="#b06a08" stroke-width="0.5"/><path d="M6,0.8 H11 V4.8 H13.6 L8.5,9.8 L3.4,4.8 H6 Z" fill="#18d018" stroke="#087a08" stroke-width="0.6"/></svg>
<svg class="ic" style="left:785px;top:605px" width="16" height="16" viewBox="0 0 16 16"><rect x="0" y="0" width="16" height="16" fill="#7f5a38"/><rect x="7" y="2" width="2" height="2" fill="#fff"/><rect x="7" y="5.4" width="2" height="2" fill="#fff"/><path d="M4.2,9 H11.8 L8,13.4 Z" fill="#fff"/><rect x="7" y="8" width="2" height="2" fill="#fff"/></svg>
<svg class="ic" style="left:785px;top:628px" width="16" height="16" viewBox="0 0 16 16"><rect x="0.5" y="0.5" width="15" height="15" fill="#f4f4f4" stroke="#cfcfcf"/><rect x="3" y="1" width="1" height="14" fill="#cfcfcf"/><rect x="9" y="3.4" width="4" height="1.3" fill="#777"/><rect x="9" y="6.4" width="4" height="1.3" fill="#777"/><rect x="9" y="9.4" width="4" height="1.3" fill="#777"/><rect x="6.6" y="2" width="1" height="12" fill="#cfcfcf"/></svg>
<svg class="ic" style="left:785px;top:650px" width="16" height="16" viewBox="0 0 16 16"><rect x="1" y="7.6" width="14" height="3" fill="#d9646a"/></svg>
<svg class="ic" style="left:785px;top:673px" width="16" height="17" viewBox="0 0 16 17"><circle cx="6" cy="6" r="4.4" fill="none" stroke="#555" stroke-width="1.4"/><path d="M9.2,9.4 L14.4,14.6" stroke="#555" stroke-width="2.2" stroke-linecap="round"/></svg>
<div class="tx" style="top:164px">Table des clients</div>
<div class="tx" style="top:186px">Table des fnrs</div>
<div class="tx" style="top:208px">Table des familles</div>
<div class="tx" style="top:230px">Table des articles</div>
<div class="tx" style="top:252px">Table des MO</div>
<div class="tx" style="top:274px">Remises par type</div>
<div class="tx" style="top:296px">Comptoir article</div>
<div class="tx" style="top:393px">Factures</div>
<div class="tx" style="top:416px">Commandes fnrs</div>
<div class="tx" style="top:439px">Réception manuelle</div>
<div class="tx" style="top:462px">Réception auto.</div>
<div class="tx" style="top:485px">Validation des réceptions</div>
<div class="tx" style="top:508px">Régularisations</div>
<div class="tx" style="top:604px">Archives</div>
<div class="tx" style="top:627px">Factures fin mois</div>
<div class="tx" style="top:650px">Cloture mensuelle</div>
<div class="tx" style="top:673px">Synthèse des dus</div>
</body></html>
